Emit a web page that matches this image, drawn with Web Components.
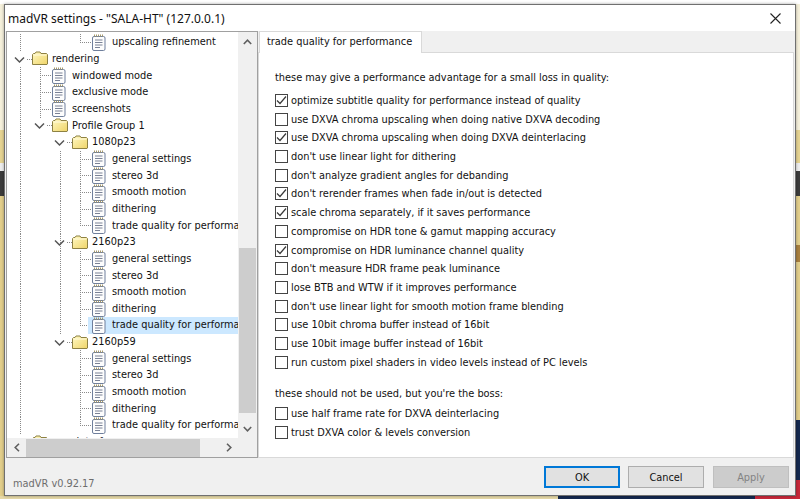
<!DOCTYPE html>
<html>
<head>
<meta charset="utf-8">
<title>madVR settings</title>
<style>
html, body { margin: 0; height: 499px; overflow: hidden; }
body { font-family: "DejaVu Sans Condensed", "DejaVu Sans", sans-serif; font-stretch: condensed; font-size: 10.9px; color: #111; }
</style>
</head>
<body>
<mad-desktop>
  <mad-window title="madVR settings - &quot;SALA-HT&quot; (127.0.0.1)">
    <tree-panel slot="tree">
      <tree-row kind="page" x="85" lines="13" corner="73">upscaling refinement</tree-row>
      <tree-row kind="folder" x="25" chevron="12" lines="">rendering</tree-row>
      <tree-row kind="page" x="45" lines="13" tee="33">windowed mode</tree-row>
      <tree-row kind="page" x="45" lines="13" tee="33">exclusive mode</tree-row>
      <tree-row kind="page" x="45" lines="13" tee="33">screenshots</tree-row>
      <tree-row kind="folder" x="45" chevron="32" lines="13">Profile Group 1</tree-row>
      <tree-row kind="folder" x="65" chevron="52" lines="13">1080p23</tree-row>
      <tree-row kind="page" x="85" lines="13,53" tee="73">general settings</tree-row>
      <tree-row kind="page" x="85" lines="13,53" tee="73">stereo 3d</tree-row>
      <tree-row kind="page" x="85" lines="13,53" tee="73">smooth motion</tree-row>
      <tree-row kind="page" x="85" lines="13,53" tee="73">dithering</tree-row>
      <tree-row kind="page" x="85" lines="13,53" corner="73">trade quality for performance</tree-row>
      <tree-row kind="folder" x="65" chevron="52" lines="13,53">2160p23</tree-row>
      <tree-row kind="page" x="85" lines="13,53" tee="73">general settings</tree-row>
      <tree-row kind="page" x="85" lines="13,53" tee="73">stereo 3d</tree-row>
      <tree-row kind="page" x="85" lines="13,53" tee="73">smooth motion</tree-row>
      <tree-row kind="page" x="85" lines="13,53" tee="73">dithering</tree-row>
      <tree-row kind="page" x="85" lines="13,53" corner="73" selected>trade quality for performance</tree-row>
      <tree-row kind="folder" x="65" chevron="52" lines="13">2160p59</tree-row>
      <tree-row kind="page" x="85" lines="13" tee="73">general settings</tree-row>
      <tree-row kind="page" x="85" lines="13" tee="73">stereo 3d</tree-row>
      <tree-row kind="page" x="85" lines="13" tee="73">smooth motion</tree-row>
      <tree-row kind="page" x="85" lines="13" tee="73">dithering</tree-row>
      <tree-row kind="page" x="85" lines="13" corner="73">trade quality for performance</tree-row>
      <tree-row kind="folder" x="25" chevron="12">user interface</tree-row>
    </tree-panel>
    <tab-page slot="page" label="trade quality for performance">
      <option-group heading="these may give a performance advantage for a small loss in quality:" gap="5">
        <option-check checked>optimize subtitle quality for performance instead of quality</option-check>
        <option-check>use DXVA chroma upscaling when doing native DXVA decoding</option-check>
        <option-check checked>use DXVA chroma upscaling when doing DXVA deinterlacing</option-check>
        <option-check>don't use linear light for dithering</option-check>
        <option-check>don't analyze gradient angles for debanding</option-check>
        <option-check checked>don't rerender frames when fade in/out is detected</option-check>
        <option-check checked>scale chroma separately, if it saves performance</option-check>
        <option-check>compromise on HDR tone &amp; gamut mapping accuracy</option-check>
        <option-check checked>compromise on HDR luminance channel quality</option-check>
        <option-check>don't measure HDR frame peak luminance</option-check>
        <option-check>lose BTB and WTW if it improves performance</option-check>
        <option-check>don't use linear light for smooth motion frame blending</option-check>
        <option-check>use 10bit chroma buffer instead of 16bit</option-check>
        <option-check>use 10bit image buffer instead of 16bit</option-check>
        <option-check>run custom pixel shaders in video levels instead of PC levels</option-check>
      </option-group>
      <option-group heading="these should not be used, but you're the boss:" gap="2.5" style="margin-top:14px">
        <option-check>use half frame rate for DXVA deinterlacing</option-check>
        <option-check>trust DXVA color &amp; levels conversion</option-check>
      </option-group>
    </tab-page>
    <span slot="version">madVR v0.92.17</span>
    <dialog-button slot="buttons" primary>OK</dialog-button>
    <dialog-button slot="buttons">Cancel</dialog-button>
    <dialog-button slot="buttons" disabled>Apply</dialog-button>
  </mad-window>
</mad-desktop>

<script>
class MadDesktop extends HTMLElement {
    constructor() {
        super();
        this.attachShadow({ mode: 'open' }).innerHTML = `
        <style>
        :host {
            display: block;
            box-sizing: border-box;
            width: 800px;
            height: 499px;
            padding: 4px 4px 3px 4px;
            background:
                linear-gradient(#fff 0 4px, transparent 4px) top left / 100% 4px no-repeat,
                linear-gradient(90deg, #e6d9a8 0 558px, #14284f 558px 755px, #c8283a 755px) bottom left / 100% 3px no-repeat,
                linear-gradient(#f6f1dc 0 130px, #e6d493 130px 163px, #eeeeee 163px 171px, #3c3c3c 171px 196px, #e3cf8c 196px 245px, #a9803f 245px 262px, #e3cf8c 262px 420px, #14284f 420px 480px, #c8283a 480px) top right / 4px 100% no-repeat,
                linear-gradient(#f6f1dc 0 130px, #e6d493 130px 163px, #eeeeee 163px 171px, #3c3c3c 171px 196px, #e3cf8c 196px) top left / 4px 100% no-repeat,
                #e6d9a8;
        }
        </style>
        <slot></slot>`;
    }
}

class MadWindow extends HTMLElement {
    constructor() {
        super();
        this.attachShadow({ mode: 'open' });
    }

    connectedCallback() {
        this.shadowRoot.innerHTML = `
        <style>
        :host {
            display: flex;
            flex-direction: column;
            box-sizing: border-box;
            width: 792px;
            height: 492px;
            background: #f0f0f0;
            border: 1px solid #707070;
            box-shadow: 0 0 3px rgba(0, 0, 0, 0.35);
        }
        .title {
            flex: none;
            display: flex;
            justify-content: space-between;
            align-items: center;
            height: 26px;
            padding: 0 13px 0 3px;
            background: #fff;
            font-family: "Noto Sans", sans-serif;
            font-stretch: normal;
            font-size: 12px;
            color: #111;
        }
        .title svg { display: block; }
        .main {
            flex: none;
            display: flex;
            height: 427px;
            padding-left: 1px;
        }
        .foot {
            flex: 1;
            display: flex;
            justify-content: space-between;
            padding: 8px 6px 0 8px;
        }
        .version {
            padding-top: 11px;
            color: #6d6d6d;
        }
        .buttons { display: flex; gap: 8px; }
        </style>
        <div class="title">
            <span>${this.getAttribute('title')}</span>
            <svg width="13" height="13" viewBox="0 0 13 13"><path d="M1.5 1.5l10 10M11.5 1.5l-10 10" stroke="#222" stroke-width="1.1" fill="none"/></svg>
        </div>
        <div class="main">
            <slot name="tree"></slot>
            <slot name="page"></slot>
        </div>
        <div class="foot">
            <div class="version"><slot name="version"></slot></div>
            <div class="buttons"><slot name="buttons"></slot></div>
        </div>`;
    }
}

class TreePanel extends HTMLElement {
    constructor() {
        super();
        this.attachShadow({ mode: 'open' }).innerHTML = `
        <style>
        :host {
            display: grid;
            grid-template-columns: 231px 19px;
            grid-template-rows: 406px 19px;
            box-sizing: border-box;
            width: 252px;
            height: 427px;
            border: 1px solid #a0a0a0;
            background: #f0f0f0;
        }
        .rows {
            overflow: hidden;
            background: #fff;
            padding-top: 2px;
        }
        .vbar, .hbar { display: flex; align-items: center; }
        .vbar { flex-direction: column; }
        .btn { flex: none; display: flex; align-items: center; justify-content: center; }
        .vbar .btn { width: 19px; height: 19px; }
        .hbar .btn { width: 19px; height: 19px; }
        .vbar .space { flex: none; height: 197px; }
        .vbar .thumb { flex: none; width: 17px; height: 165px; background: #cdcdcd; }
        .hbar .thumb { flex: none; width: 174px; height: 18px; background: #cdcdcd; }
        .hbar .space { flex: 1; }
        svg { display: block; }
        </style>
        <div class="rows"><slot></slot></div>
        <div class="vbar">
            <div class="btn"><svg width="9" height="6" viewBox="0 0 9 6"><path d="M.8 5L4.5 1.2 8.2 5" stroke="#606060" stroke-width="1.6" fill="none"/></svg></div>
            <div class="space"></div>
            <div class="thumb"></div>
            <div class="space" style="height:6px"></div>
            <div class="btn"><svg width="9" height="6" viewBox="0 0 9 6"><path d="M.8 1L4.5 4.8 8.2 1" stroke="#606060" stroke-width="1.6" fill="none"/></svg></div>
        </div>
        <div class="hbar">
            <div class="btn"><svg width="6" height="9" viewBox="0 0 6 9"><path d="M5 .8L1.2 4.5 5 8.2" stroke="#606060" stroke-width="1.6" fill="none"/></svg></div>
            <div class="thumb"></div>
            <div class="space"></div>
            <div class="btn"><svg width="6" height="9" viewBox="0 0 6 9"><path d="M1 .8L4.8 4.5 1 8.2" stroke="#606060" stroke-width="1.6" fill="none"/></svg></div>
        </div>
        <div></div>`;
    }
}

const FOLDER_ICON = `<svg width="17" height="15" viewBox="0 0 17 15">
    <defs><linearGradient id="f" x1="0" y1="0" x2="1" y2="1"><stop offset="0" stop-color="#fff9c4"/><stop offset="1" stop-color="#efd468"/></linearGradient></defs>
    <path d="M.5 13.5V3.5l1-1h1.5l1-1.5h4l1 1.5h5.5l1 1v9.5l-.5.5H1z" fill="url(#f)" stroke="#8d8143"/>
    <path d="M1.5 4h13" stroke="#fffbe0"/>
</svg>`;

const PAGE_ICON = `<svg width="14" height="17" viewBox="0 0 14 17">
    <rect x=".5" y="2.5" width="12.5" height="14" rx="1.5" fill="#fdfdfd" stroke="#6f7f9c"/>
    <path d="M2 1.5h10" stroke="#a89a6a" stroke-width="2" stroke-dasharray="1 1"/>
    <path d="M3 6h7.5M3 8.5h7.5M3 11h7.5M3 13.5h5" stroke="#7a8296"/>
</svg>`;

class TreeRow extends HTMLElement {
    constructor() {
        super();
        this.attachShadow({ mode: 'open' });
    }

    connectedCallback() {
        const x = Number(this.getAttribute('x'));
        const folder = this.getAttribute('kind') === 'folder';
        const dots = 'stroke="#8a8a8a" stroke-dasharray="1 1"';
        let guides = '';
        (this.getAttribute('lines') || '').split(',').filter(Boolean).forEach(l => {
            guides += `<path d="M${l}.5 0V17" ${dots}/>`;
        });
        const tee = this.getAttribute('tee');
        const corner = this.getAttribute('corner');
        if (tee) guides += `<path d="M${tee}.5 0V17M${tee} 8.5H${x}" ${dots}/>`;
        if (corner) guides += `<path d="M${corner}.5 0V8.5M${corner} 8.5H${x}" ${dots}/>`;
        const chevron = this.getAttribute('chevron');
        let arrow = '';
        if (chevron) {
            const c = Number(chevron);
            guides += `<path d="M${c + 8} 8.5H${x}" ${dots}/>`;
            arrow = `<path d="M${c - 4} 6.5l4.5 4.5 4.5-4.5" stroke="#555" stroke-width="1.5" fill="none"/>`;
        }
        this.shadowRoot.innerHTML = `
        <style>
        :host {
            display: block;
            position: relative;
            height: 16.667px;
            white-space: nowrap;
        }
        .guides { position: absolute; left: 0; top: 0; }
        .item {
            position: relative;
            display: flex;
            align-items: center;
            height: 100%;
            margin-left: ${x - 4}px;
            padding-left: 4px;
        }
        .icon { flex: none; width: 20px; }
        .icon svg { display: block; }
        .text { overflow: hidden; flex: 1; line-height: 16px; }
        :host([selected]) .item { background: #cce8ff; }
        </style>
        <svg class="guides" width="231" height="17">${guides}${arrow}</svg>
        <div class="item">
            <span class="icon">${folder ? FOLDER_ICON : PAGE_ICON}</span>
            <span class="text"><slot></slot></span>
        </div>`;
    }
}

class TabPage extends HTMLElement {
    constructor() {
        super();
        this.attachShadow({ mode: 'open' });
    }

    connectedCallback() {
        this.shadowRoot.innerHTML = `
        <style>
        :host {
            display: flex;
            flex-direction: column;
            box-sizing: border-box;
            width: 536px;
            height: 427px;
        }
        .strip {
            flex: none;
            display: flex;
            height: 21px;
            padding-left: 1px;
        }
        .tab {
            box-sizing: border-box;
            width: 163px;
            height: 22px;
            padding: 3px 0 0 7px;
            background: #fff;
            border: 1px solid #d9d9d9;
            border-bottom: none;
            position: relative;
            z-index: 1;
            white-space: nowrap;
        }
        .body {
            flex: 1;
            box-sizing: border-box;
            padding: 17px 0 0 16px;
            background: #fff;
            border: 1px solid #d9d9d9;
        }
        </style>
        <div class="strip"><div class="tab">${this.getAttribute('label')}</div></div>
        <div class="body"><slot></slot></div>`;
    }
}

class OptionGroup extends HTMLElement {
    constructor() {
        super();
        this.attachShadow({ mode: 'open' });
    }

    connectedCallback() {
        this.shadowRoot.innerHTML = `
        <style>
        :host { display: block; }
        .head { height: 16px; line-height: 16px; margin-bottom: ${this.getAttribute('gap')}px; }
        </style>
        <div class="head">${this.getAttribute('heading')}</div>
        <slot></slot>`;
    }
}

class OptionCheck extends HTMLElement {
    constructor() {
        super();
        this.attachShadow({ mode: 'open' });
    }

    connectedCallback() {
        const mark = this.hasAttribute('checked')
            ? '<svg width="11" height="11" viewBox="0 0 11 11"><path d="M1 5.5l3 3L10 1.5" stroke="#3a3a3a" stroke-width="1.2" fill="none"/></svg>'
            : '';
        this.shadowRoot.innerHTML = `
        <style>
        :host {
            display: flex;
            align-items: center;
            height: 18.72px;
            white-space: nowrap;
        }
        .box {
            flex: none;
            display: flex;
            align-items: center;
            justify-content: center;
            box-sizing: border-box;
            width: 13px;
            height: 13px;
            margin-right: 3px;
            border: 1px solid #444;
            background: #fff;
        }
        svg { display: block; }
        </style>
        <span class="box">${mark}</span>
        <span><slot></slot></span>`;
    }
}

class DialogButton extends HTMLElement {
    constructor() {
        super();
        this.attachShadow({ mode: 'open' }).innerHTML = `
        <style>
        :host {
            display: flex;
            align-items: center;
            justify-content: center;
            box-sizing: border-box;
            width: 76px;
            height: 22px;
            background: #e1e1e1;
            border: 1px solid #adadad;
            color: #111;
        }
        :host([primary]) { border: 2px solid #0078d7; }
        :host([disabled]) { margin-left: 1px; background: #cccccc; border-color: #bfbfbf; color: #838383; }
        </style>
        <slot></slot>`;
    }
}

customElements.define('mad-desktop', MadDesktop);
customElements.define('mad-window', MadWindow);
customElements.define('tree-panel', TreePanel);
customElements.define('tree-row', TreeRow);
customElements.define('tab-page', TabPage);
customElements.define('option-group', OptionGroup);
customElements.define('option-check', OptionCheck);
customElements.define('dialog-button', DialogButton);
</script>
</body>
</html>
